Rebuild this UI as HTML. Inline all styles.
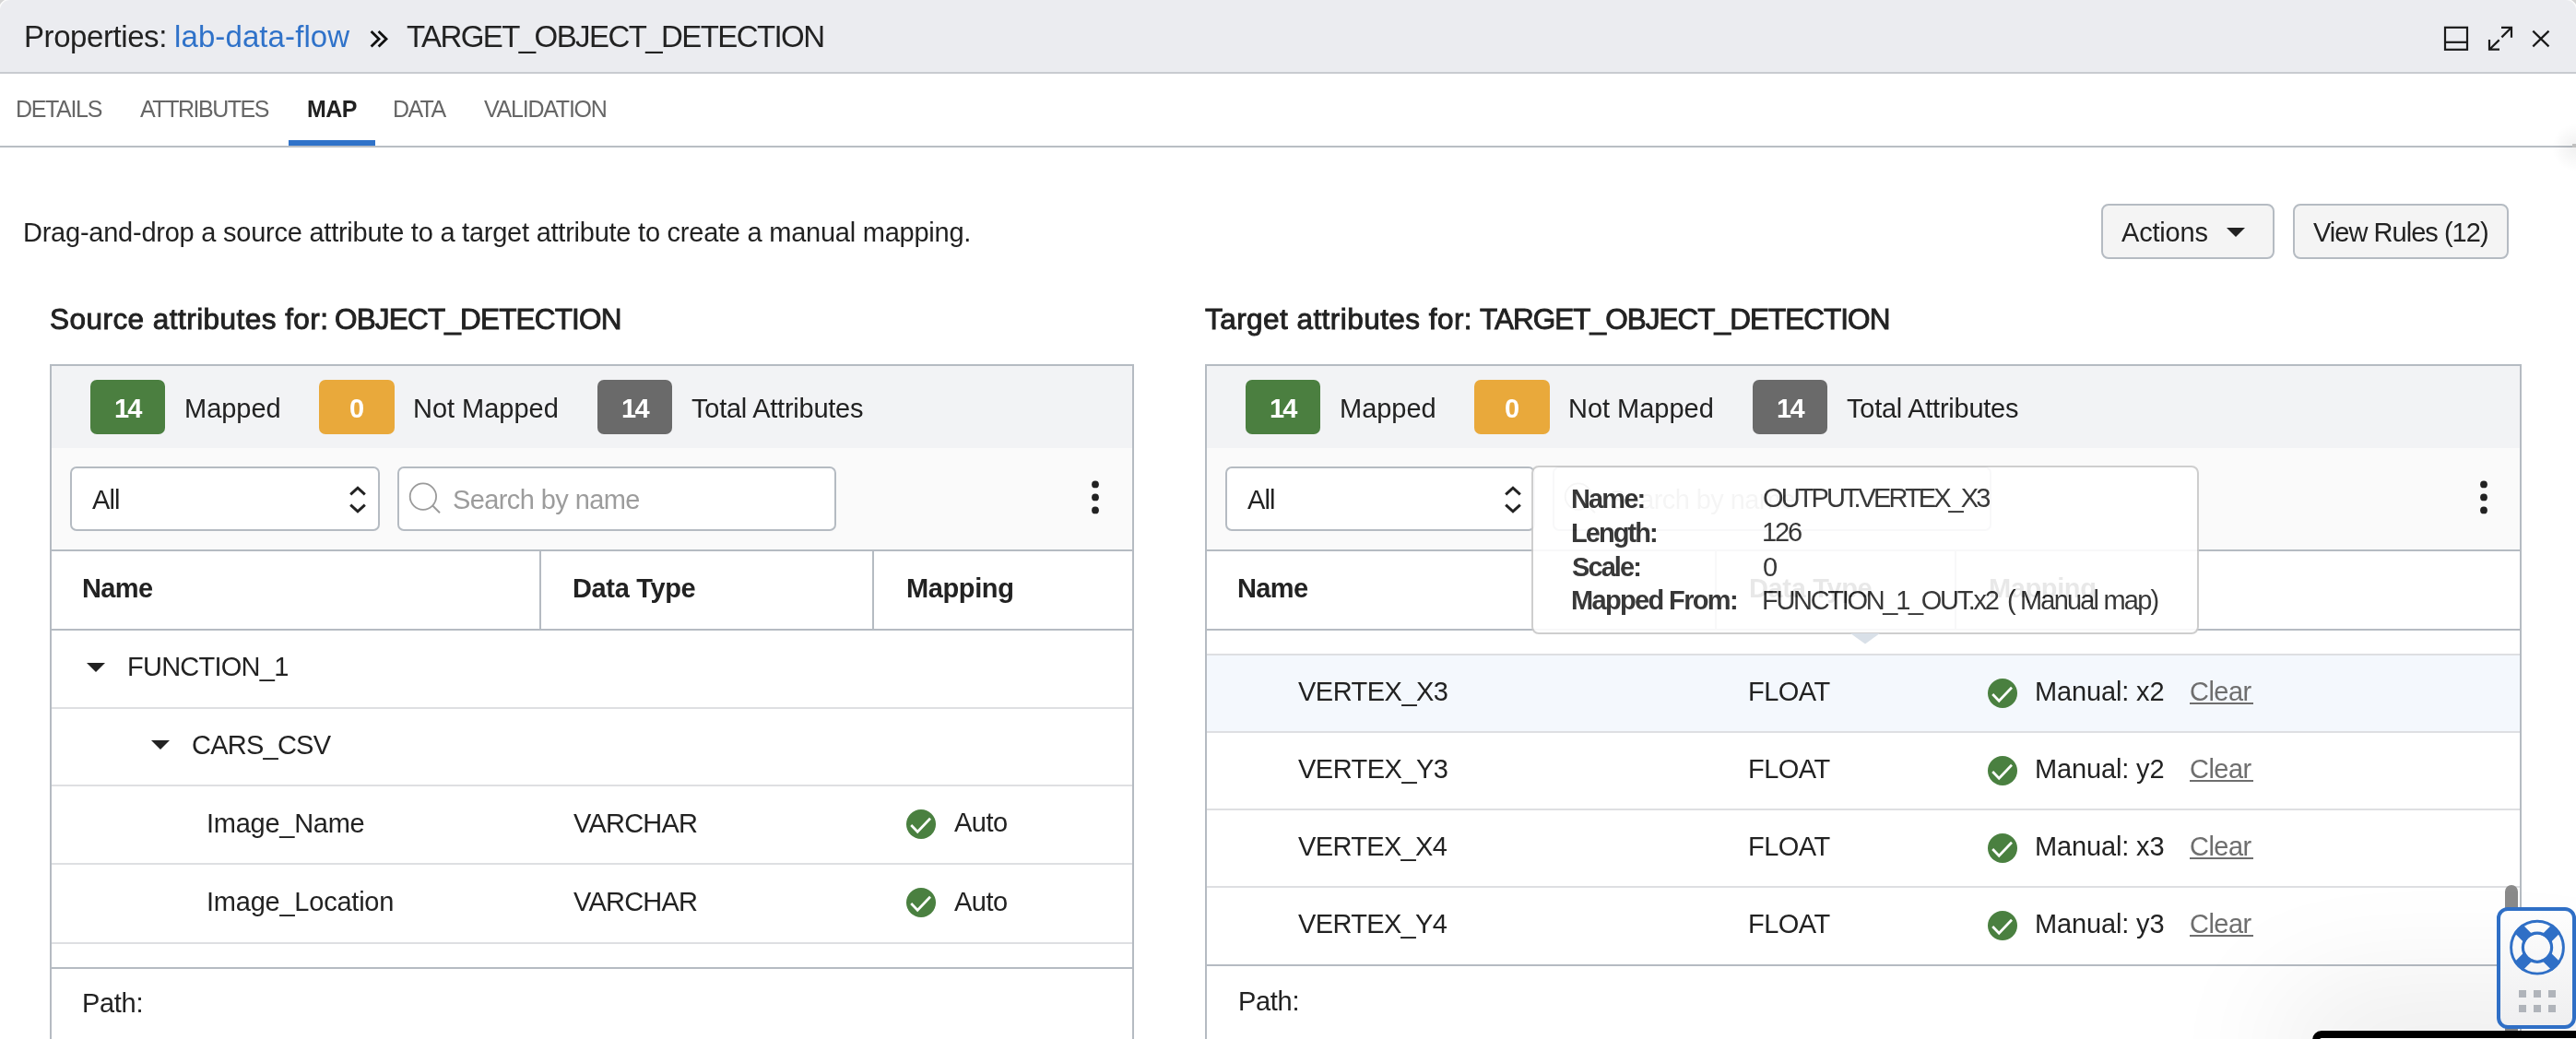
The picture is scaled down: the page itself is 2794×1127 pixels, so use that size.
<!DOCTYPE html>
<html><head><meta charset="utf-8">
<style>
*{box-sizing:border-box;margin:0;padding:0}
html,body{width:2794px;height:1127px;overflow:hidden;background:#fff}
body{position:relative;font-family:"Liberation Sans",sans-serif;color:#222}
.a{position:absolute;white-space:nowrap;will-change:transform}
.b{position:absolute}
.pb{position:absolute;background:#b5bbc2}
.badge{position:absolute;top:412px;height:59px;width:81px;border-radius:7px}
.inp{position:absolute;top:506px;height:70px;border:2px solid #b5bbc2;border-radius:7px;background:#fff}
.hl{position:absolute;height:2px;background:#b5bbc2}
.rl{position:absolute;height:2px;background:#dedfe2}
.btn{position:absolute;top:221px;height:60px;border:2px solid #b5bbc2;border-radius:8px;background:#f4f4f4}
</style></head><body>
<!-- header -->
<div class="b" style="left:0;top:0;width:12px;height:12px;background:#d4d4d4"></div>
<div class="b" style="left:2782px;top:0;width:12px;height:12px;background:#d4d4d4"></div>
<div class="b" style="left:0;top:0;width:2794px;height:80px;background:#ebecf0;border-bottom:2px solid #c8cbd0;border-radius:11px 11px 0 0;box-shadow:0 0 0 1.5px rgba(255,255,255,0.9)"></div>
<svg class="b" style="left:2640px;top:20px" width="140" height="45" viewBox="2640 20 140 45">
  <g fill="none" stroke="#1a1a1a" stroke-width="2.2">
    <rect x="2652" y="29.8" width="24" height="24"/>
    <line x1="2652" y1="45.8" x2="2676" y2="45.8"/>
    <path d="M2713 29.8H2724V40.7M2724 29.8L2713.4 40.4M2700 43V53.7H2711M2700 53.7L2710.7 43.4"/>
    <path d="M2747.3 33.6L2764.5 50.4M2764.5 33.6L2747.3 50.4"/>
  </g>
</svg>
<!-- tabs -->
<div class="b" style="left:0;top:158px;width:2794px;height:2px;background:#b9bec4"></div>
<div class="b" style="left:313px;top:152px;width:94px;height:6px;background:#2f72c9"></div>
<div class="b" style="left:2754px;top:130px;width:40px;height:60px;background:radial-gradient(ellipse 26px 26px at 100% 50%,rgba(0,0,0,0.06),rgba(0,0,0,0))"></div>
<div class="b" style="left:2790px;top:156px;width:4px;height:4px;background:#c0c0c0"></div>
<!-- buttons -->
<div class="btn" style="left:2279px;width:188px"></div>
<svg class="b" style="left:2414px;top:246px" width="22" height="12"><path d="M1 1H21L11 11Z" fill="#222"/></svg>
<div class="btn" style="left:2487px;width:234px"></div>

<!-- ============ SOURCE PANEL ============ -->
<div class="b" style="left:56px;top:397px;width:1172px;height:89px;background:#f2f3f5"></div>
<div class="b" style="left:56px;top:486px;width:1172px;height:110px;background:#fafafa"></div>
<div class="pb" style="left:54px;top:395px;width:1176px;height:2px"></div>
<div class="pb" style="left:54px;top:395px;width:2px;height:732px"></div>
<div class="pb" style="left:1228px;top:395px;width:2px;height:732px"></div>
<div class="badge" style="left:98px;background:#4b7f40"></div>
<div class="badge" style="left:346px;width:82px;background:#e9a93b"></div>
<div class="badge" style="left:648px;background:#6a6a6a"></div>
<div class="inp" style="left:76px;width:336px"></div>
<svg class="b" style="left:376px;top:524px" width="24" height="36" viewBox="376 524 24 36"><path d="M380.2 536.4L388 529.2L395.8 536.4M380.2 547.6L388 554.8L395.8 547.6" fill="none" stroke="#222" stroke-width="3"/></svg>
<div class="inp" style="left:431px;width:476px"></div>
<svg class="b" style="left:440px;top:520px" width="44" height="42" viewBox="440 520 44 42"><circle cx="458.9" cy="538.6" r="14.2" fill="none" stroke="#9b9b9b" stroke-width="1.8"/><path d="M469 548.3L477 556.3" stroke="#9b9b9b" stroke-width="2"/></svg>
<svg class="b" style="left:1180px;top:518px" width="16" height="42"><circle cx="8" cy="7.4" r="3.9" fill="#222"/><circle cx="8" cy="21.4" r="3.9" fill="#222"/><circle cx="8" cy="35.4" r="3.9" fill="#222"/></svg>
<div class="hl" style="left:56px;top:596px;width:1172px"></div>
<div class="b" style="left:56px;top:598px;width:1172px;height:84px;background:#fff"></div>
<div class="hl" style="left:56px;top:682px;width:1172px"></div>
<div class="pb" style="left:585px;top:598px;width:2px;height:84px"></div>
<div class="pb" style="left:946px;top:598px;width:2px;height:84px"></div>
<div class="b" style="left:56px;top:684px;width:1172px;height:365px;background:#fff"></div>
<div class="rl" style="left:56px;top:767px;width:1172px"></div>
<div class="rl" style="left:56px;top:851px;width:1172px"></div>
<div class="rl" style="left:56px;top:936px;width:1172px"></div>
<div class="rl" style="left:56px;top:1022px;width:1172px"></div>
<div class="hl" style="left:56px;top:1049px;width:1172px"></div>
<svg class="b" style="left:94px;top:719px" width="20" height="11"><path d="M0 0H20L10 10Z" fill="#222"/></svg>
<svg class="b" style="left:164px;top:803px" width="20" height="11"><path d="M0 0H20L10 10Z" fill="#222"/></svg>
<svg class="b" style="left:983px;top:878px" width="32" height="32"><circle cx="16" cy="16" r="16" fill="#4a8040"/><path d="M5.2 17L12.2 24.2L26 9.8" fill="none" stroke="#fff" stroke-width="2.7"/></svg>
<svg class="b" style="left:983px;top:963px" width="32" height="32"><circle cx="16" cy="16" r="16" fill="#4a8040"/><path d="M5.2 17L12.2 24.2L26 9.8" fill="none" stroke="#fff" stroke-width="2.7"/></svg>

<!-- ============ TARGET PANEL ============ -->
<div class="b" style="left:1309px;top:397px;width:1424px;height:89px;background:#f2f3f5"></div>
<div class="b" style="left:1309px;top:486px;width:1424px;height:110px;background:#fafafa"></div>
<div class="pb" style="left:1307px;top:395px;width:1428px;height:2px"></div>
<div class="pb" style="left:1307px;top:395px;width:2px;height:732px"></div>
<div class="pb" style="left:2733px;top:395px;width:2px;height:732px"></div>
<div class="badge" style="left:1351px;background:#4b7f40"></div>
<div class="badge" style="left:1599px;width:82px;background:#e9a93b"></div>
<div class="badge" style="left:1901px;background:#6a6a6a"></div>
<div class="inp" style="left:1329px;width:336px"></div>
<svg class="b" style="left:1629px;top:524px" width="24" height="36" viewBox="376 524 24 36"><path d="M380.2 536.4L388 529.2L395.8 536.4M380.2 547.6L388 554.8L395.8 547.6" fill="none" stroke="#222" stroke-width="3"/></svg>
<div class="inp" style="left:1684px;width:476px"></div>
<svg class="b" style="left:1693px;top:520px" width="44" height="42" viewBox="440 520 44 42"><circle cx="458.9" cy="538.6" r="14.2" fill="none" stroke="#9b9b9b" stroke-width="1.8"/><path d="M469 548.3L477 556.3" stroke="#9b9b9b" stroke-width="2"/></svg>
<svg class="b" style="left:2686px;top:518px" width="16" height="42"><circle cx="8" cy="7.4" r="3.9" fill="#222"/><circle cx="8" cy="21.4" r="3.9" fill="#222"/><circle cx="8" cy="35.4" r="3.9" fill="#222"/></svg>
<div class="hl" style="left:1309px;top:596px;width:1424px"></div>
<div class="b" style="left:1309px;top:598px;width:1424px;height:84px;background:#fff"></div>
<div class="hl" style="left:1309px;top:682px;width:1424px"></div>
<div class="pb" style="left:1860px;top:598px;width:2px;height:84px"></div>
<div class="pb" style="left:2120px;top:598px;width:2px;height:84px"></div>
<div class="b" style="left:1309px;top:684px;width:1424px;height:363px;background:#fff"></div>
<div class="rl" style="left:1309px;top:709px;width:1424px"></div>
<div class="b" style="left:1309px;top:711px;width:1424px;height:82px;background:#f4f8fd"></div>
<div class="rl" style="left:1309px;top:793px;width:1424px"></div>
<div class="rl" style="left:1309px;top:877px;width:1424px"></div>
<div class="rl" style="left:1309px;top:961px;width:1424px"></div>
<div class="hl" style="left:1309px;top:1046px;width:1424px"></div>
<svg class="b" style="left:2156px;top:736px" width="32" height="32"><circle cx="16" cy="16" r="16" fill="#4a8040"/><path d="M5.2 17L12.2 24.2L26 9.8" fill="none" stroke="#fff" stroke-width="2.7"/></svg>
<svg class="b" style="left:2156px;top:820px" width="32" height="32"><circle cx="16" cy="16" r="16" fill="#4a8040"/><path d="M5.2 17L12.2 24.2L26 9.8" fill="none" stroke="#fff" stroke-width="2.7"/></svg>
<svg class="b" style="left:2156px;top:904px" width="32" height="32"><circle cx="16" cy="16" r="16" fill="#4a8040"/><path d="M5.2 17L12.2 24.2L26 9.8" fill="none" stroke="#fff" stroke-width="2.7"/></svg>
<svg class="b" style="left:2156px;top:988px" width="32" height="32"><circle cx="16" cy="16" r="16" fill="#4a8040"/><path d="M5.2 17L12.2 24.2L26 9.8" fill="none" stroke="#fff" stroke-width="2.7"/></svg>
<!-- clear underlines -->
<div class="b" style="left:2375px;top:762px;width:69px;height:1.5px;background:#6e6e6e"></div>
<div class="b" style="left:2375px;top:846px;width:69px;height:1.5px;background:#6e6e6e"></div>
<div class="b" style="left:2375px;top:930px;width:69px;height:1.5px;background:#6e6e6e"></div>
<div class="b" style="left:2375px;top:1014px;width:69px;height:1.5px;background:#6e6e6e"></div>
<!-- scrollbar thumb -->
<div class="b" style="left:2717px;top:960px;width:14px;height:170px;border-radius:7px;background:#8a8a8a"></div>

<svg class="b" style="left:396px;top:28px" width="30" height="28" viewBox="396 28 30 28"><path d="M402.6 34L411 42.2L402.6 50.4M410.6 34L419 42.2L410.6 50.4" fill="none" stroke="#111" stroke-width="2.8"/></svg>
<div class="a" style="left:26.3px;top:22.8px;font-size:33px;line-height:33px;letter-spacing:-0.42px">Properties:</div>
<div class="a" style="left:189.2px;top:22.8px;font-size:33px;line-height:33px;letter-spacing:0.10px;color:#2f72c9">lab-data-flow</div>
<div class="a" style="left:440.8px;top:22.8px;font-size:33px;line-height:33px;letter-spacing:-1.59px">TARGET_OBJECT_DETECTION</div>
<div class="a" style="left:17.4px;top:106.1px;font-size:25px;line-height:25px;letter-spacing:-1.34px;color:#666">DETAILS</div>
<div class="a" style="left:152.4px;top:106.1px;font-size:25px;line-height:25px;letter-spacing:-1.48px;color:#666">ATTRIBUTES</div>
<div class="a" style="left:332.9px;top:106.1px;font-size:25px;line-height:25px;letter-spacing:-0.59px;font-weight:bold">MAP</div>
<div class="a" style="left:426.0px;top:106.1px;font-size:25px;line-height:25px;letter-spacing:-1.63px;color:#666">DATA</div>
<div class="a" style="left:525.2px;top:106.1px;font-size:25px;line-height:25px;letter-spacing:-1.23px;color:#666">VALIDATION</div>
<div class="a" style="left:25.3px;top:238.4px;font-size:29px;line-height:29px;letter-spacing:-0.24px">Drag-and-drop a source attribute to a target attribute to create a manual mapping.</div>
<div class="a" style="left:2301.2px;top:238.1px;font-size:29px;line-height:29px;letter-spacing:-0.18px">Actions</div>
<div class="a" style="left:2509.1px;top:238.0px;font-size:29px;line-height:29px;letter-spacing:-0.97px">View Rules (12)</div>
<div class="a" style="left:53.5px;top:331.2px;font-size:31.5px;line-height:31.5px;letter-spacing:0.46px;-webkit-text-stroke:0.9px #222">Source attributes for:</div>
<div class="a" style="left:363.2px;top:331.2px;font-size:31.5px;line-height:31.5px;letter-spacing:-0.82px;-webkit-text-stroke:0.9px #222">OBJECT_DETECTION</div>
<div class="a" style="left:1307.3px;top:331.2px;font-size:31.5px;line-height:31.5px;letter-spacing:0.45px;-webkit-text-stroke:0.9px #222">Target attributes for:</div>
<div class="a" style="left:1605.1px;top:331.2px;font-size:31.5px;line-height:31.5px;letter-spacing:-0.97px;-webkit-text-stroke:0.9px #222">TARGET_OBJECT_DETECTION</div>
<div class="a" style="left:123.5px;top:429.3px;font-size:29px;line-height:29px;letter-spacing:-1.93px;font-weight:bold;color:#fff">14</div>
<div class="a" style="left:199.5px;top:429.3px;font-size:29px;line-height:29px;letter-spacing:-0.03px">Mapped</div>
<div class="a" style="left:378.6px;top:429.3px;font-size:29px;line-height:29px;font-weight:bold;color:#fff">0</div>
<div class="a" style="left:448.2px;top:429.3px;font-size:29px;line-height:29px;letter-spacing:-0.02px">Not Mapped</div>
<div class="a" style="left:673.5px;top:429.3px;font-size:29px;line-height:29px;letter-spacing:-1.63px;font-weight:bold;color:#fff">14</div>
<div class="a" style="left:750.0px;top:429.3px;font-size:29px;line-height:29px;letter-spacing:-0.25px">Total Attributes</div>
<div class="a" style="left:99.9px;top:528.3px;font-size:29px;line-height:29px;letter-spacing:-0.89px">All</div>
<div class="a" style="left:491.4px;top:528.3px;font-size:29px;line-height:29px;letter-spacing:-0.60px;color:#9c9c9c">Search by name</div>
<div class="a" style="left:1376.5px;top:429.3px;font-size:29px;line-height:29px;letter-spacing:-1.93px;font-weight:bold;color:#fff">14</div>
<div class="a" style="left:1452.5px;top:429.3px;font-size:29px;line-height:29px;letter-spacing:-0.03px">Mapped</div>
<div class="a" style="left:1631.6px;top:429.3px;font-size:29px;line-height:29px;font-weight:bold;color:#fff">0</div>
<div class="a" style="left:1701.2px;top:429.3px;font-size:29px;line-height:29px;letter-spacing:-0.02px">Not Mapped</div>
<div class="a" style="left:1926.5px;top:429.3px;font-size:29px;line-height:29px;letter-spacing:-1.63px;font-weight:bold;color:#fff">14</div>
<div class="a" style="left:2003.0px;top:429.3px;font-size:29px;line-height:29px;letter-spacing:-0.25px">Total Attributes</div>
<div class="a" style="left:1352.9px;top:528.3px;font-size:29px;line-height:29px;letter-spacing:-0.89px">All</div>
<div class="a" style="left:1744.4px;top:528.3px;font-size:29px;line-height:29px;letter-spacing:-0.60px;color:#9c9c9c">Search by name</div>
<div class="a" style="left:89.3px;top:624.3px;font-size:29px;line-height:29px;letter-spacing:-0.65px;font-weight:bold">Name</div>
<div class="a" style="left:621.0px;top:624.3px;font-size:29px;line-height:29px;letter-spacing:-0.35px;font-weight:bold">Data Type</div>
<div class="a" style="left:983.3px;top:624.3px;font-size:29px;line-height:29px;letter-spacing:-0.38px;font-weight:bold">Mapping</div>
<div class="a" style="left:137.5px;top:709.3px;font-size:29px;line-height:29px;letter-spacing:-0.75px">FUNCTION_1</div>
<div class="a" style="left:208.2px;top:794.1px;font-size:29px;line-height:29px;letter-spacing:-0.76px">CARS_CSV</div>
<div class="a" style="left:223.7px;top:878.6px;font-size:29px;line-height:29px;letter-spacing:-0.26px">Image_Name</div>
<div class="a" style="left:622.0px;top:878.6px;font-size:29px;line-height:29px;letter-spacing:-0.77px">VARCHAR</div>
<div class="a" style="left:1035.0px;top:878.2px;font-size:29px;line-height:29px;letter-spacing:-0.54px">Auto</div>
<div class="a" style="left:223.7px;top:964.3px;font-size:29px;line-height:29px;letter-spacing:-0.23px">Image_Location</div>
<div class="a" style="left:622.0px;top:964.3px;font-size:29px;line-height:29px;letter-spacing:-0.77px">VARCHAR</div>
<div class="a" style="left:1035.0px;top:964.0px;font-size:29px;line-height:29px;letter-spacing:-0.54px">Auto</div>
<div class="a" style="left:89.0px;top:1074.0px;font-size:29px;line-height:29px;letter-spacing:-0.31px">Path:</div>
<div class="a" style="left:1342.3px;top:624.3px;font-size:29px;line-height:29px;letter-spacing:-0.65px;font-weight:bold">Name</div>
<div class="a" style="left:1896.8px;top:624.3px;font-size:29px;line-height:29px;letter-spacing:-0.35px;font-weight:bold">Data Type</div>
<div class="a" style="left:2157.0px;top:624.3px;font-size:29px;line-height:29px;letter-spacing:-0.38px;font-weight:bold">Mapping</div>
<div class="a" style="left:1408.2px;top:736.3px;font-size:29px;line-height:29px;letter-spacing:-0.52px">VERTEX_X3</div>
<div class="a" style="left:1895.8px;top:736.3px;font-size:29px;line-height:29px;letter-spacing:-0.55px">FLOAT</div>
<div class="a" style="left:2206.7px;top:736.3px;font-size:29px;line-height:29px;letter-spacing:-0.14px">Manual: x2</div>
<div class="a" style="left:2375.0px;top:736.3px;font-size:29px;line-height:29px;letter-spacing:-0.54px;color:#6e6e6e">Clear</div>
<div class="a" style="left:1408.2px;top:820.3px;font-size:29px;line-height:29px;letter-spacing:-0.52px">VERTEX_Y3</div>
<div class="a" style="left:1895.8px;top:820.3px;font-size:29px;line-height:29px;letter-spacing:-0.55px">FLOAT</div>
<div class="a" style="left:2206.7px;top:820.3px;font-size:29px;line-height:29px;letter-spacing:-0.14px">Manual: y2</div>
<div class="a" style="left:2375.0px;top:820.3px;font-size:29px;line-height:29px;letter-spacing:-0.54px;color:#6e6e6e">Clear</div>
<div class="a" style="left:1408.2px;top:904.3px;font-size:29px;line-height:29px;letter-spacing:-0.65px">VERTEX_X4</div>
<div class="a" style="left:1895.8px;top:904.3px;font-size:29px;line-height:29px;letter-spacing:-0.55px">FLOAT</div>
<div class="a" style="left:2206.7px;top:904.3px;font-size:29px;line-height:29px;letter-spacing:-0.14px">Manual: x3</div>
<div class="a" style="left:2375.0px;top:904.3px;font-size:29px;line-height:29px;letter-spacing:-0.54px;color:#6e6e6e">Clear</div>
<div class="a" style="left:1408.2px;top:988.3px;font-size:29px;line-height:29px;letter-spacing:-0.65px">VERTEX_Y4</div>
<div class="a" style="left:1895.8px;top:988.3px;font-size:29px;line-height:29px;letter-spacing:-0.55px">FLOAT</div>
<div class="a" style="left:2206.7px;top:988.3px;font-size:29px;line-height:29px;letter-spacing:-0.14px">Manual: y3</div>
<div class="a" style="left:2375.0px;top:988.3px;font-size:29px;line-height:29px;letter-spacing:-0.54px;color:#6e6e6e">Clear</div>
<div class="a" style="left:1342.9px;top:1072.0px;font-size:29px;line-height:29px;letter-spacing:-0.31px">Path:</div>

<!-- tooltip -->
<div class="b" style="left:0;top:0;width:2794px;height:1127px;opacity:0.9">
<div class="b" style="left:1661px;top:505px;width:724px;height:183px;border:2px solid #c9c9c9;border-radius:8px;background:#fff"></div>
<svg class="b" style="left:2007px;top:687px" width="32" height="12"><path d="M0 0H32L16 11.5Z" fill="#d5dde6"/></svg>
<div class="a" style="left:1704.4px;top:526.8px;font-size:29px;line-height:29px;letter-spacing:-1.87px;font-weight:bold">Name:</div>
<div class="a" style="left:1704.4px;top:563.8px;font-size:29px;line-height:29px;letter-spacing:-1.96px;font-weight:bold">Length:</div>
<div class="a" style="left:1705.4px;top:600.8px;font-size:29px;line-height:29px;letter-spacing:-1.92px;font-weight:bold">Scale:</div>
<div class="a" style="left:1704.4px;top:637.4px;font-size:29px;line-height:29px;letter-spacing:-1.65px;font-weight:bold">Mapped From:</div>
<div class="a" style="left:1912.3px;top:525.8px;font-size:29px;line-height:29px;letter-spacing:-2.92px">OUTPUT.VERTEX_X3</div>
<div class="a" style="left:1911.3px;top:563.3px;font-size:29px;line-height:29px;letter-spacing:-2.18px">126</div>
<div class="a" style="left:1912.3px;top:600.5px;font-size:29px;line-height:29px">0</div>
<div class="a" style="left:1911.3px;top:637.2px;font-size:29px;line-height:29px;letter-spacing:-2.31px">FUNCTION_1_OUT.x2</div>
<div class="a" style="left:2176.9px;top:637.2px;font-size:29px;line-height:29px">(</div>
<div class="a" style="left:2191.0px;top:637.2px;font-size:29px;line-height:29px;letter-spacing:-1.81px">Manual map)</div>
</div>

<!-- help widget -->
<div class="b" style="left:2508px;top:1118px;width:320px;height:40px;border-radius:10px;box-shadow:0 0 140px 30px rgba(0,0,0,0.10)"></div>
<div class="b" style="left:2708px;top:984px;width:86px;height:132px;border:4px solid #2f6fc6;border-radius:12px;background:linear-gradient(#fdfdfd,#efeff0)"></div>
<svg class="b" style="left:2720px;top:996px" width="64" height="64" viewBox="2720 996 64 64">
  <defs><mask id="ann"><rect x="2720" y="996" width="64" height="64" fill="#000"/><circle cx="2752" cy="1027.7" r="29.8" fill="#fff"/><circle cx="2752" cy="1027.7" r="14" fill="#000"/></mask></defs>
  <circle cx="2752" cy="1027.7" r="28.4" fill="none" stroke="#2f6fc6" stroke-width="2.9"/>
  <circle cx="2752" cy="1027.7" r="15.6" fill="none" stroke="#2f6fc6" stroke-width="3.2"/>
  <g mask="url(#ann)"><path d="M2730 1005.7L2774 1049.7M2774 1005.7L2730 1049.7" stroke="#2f6fc6" stroke-width="12.7"/></g>
</svg>
<div class="b" style="left:2732px;top:1074px;width:8px;height:8px;background:#b0b4ba"></div>
<div class="b" style="left:2748px;top:1074px;width:8px;height:8px;background:#b0b4ba"></div>
<div class="b" style="left:2764px;top:1074px;width:8px;height:8px;background:#b0b4ba"></div>
<div class="b" style="left:2732px;top:1090px;width:8px;height:8px;background:#b0b4ba"></div>
<div class="b" style="left:2748px;top:1090px;width:8px;height:8px;background:#b0b4ba"></div>
<div class="b" style="left:2764px;top:1090px;width:8px;height:8px;background:#b0b4ba"></div>
<div class="b" style="left:2508px;top:1118px;width:320px;height:40px;border:8px solid #000;border-radius:10px;background:#fff"></div>
</body></html>
